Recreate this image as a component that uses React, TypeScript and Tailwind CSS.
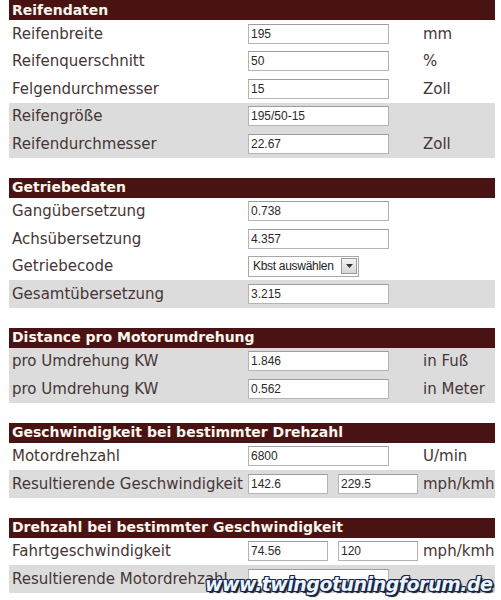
import React from "react"

type Row = {
  label: string
  values: string[]
  unit?: string
  gray?: boolean
  select?: string
}

type Section = { title: string; rows: Row[] }

const sections: Section[] = [
  {
    title: "Reifendaten",
    rows: [
      { label: "Reifenbreite", values: ["195"], unit: "mm" },
      { label: "Reifenquerschnitt", values: ["50"], unit: "%" },
      { label: "Felgendurchmesser", values: ["15"], unit: "Zoll" },
      { label: "Reifengröße", values: ["195/50-15"], gray: true },
      { label: "Reifendurchmesser", values: ["22.67"], unit: "Zoll", gray: true },
    ],
  },
  {
    title: "Getriebedaten",
    rows: [
      { label: "Gangübersetzung", values: ["0.738"] },
      { label: "Achsübersetzung", values: ["4.357"] },
      { label: "Getriebecode", values: [], select: "Kbst auswählen" },
      { label: "Gesamtübersetzung", values: ["3.215"], gray: true },
    ],
  },
  {
    title: "Distance pro Motorumdrehung",
    rows: [
      { label: "pro Umdrehung KW", values: ["1.846"], unit: "in Fuß", gray: true },
      { label: "pro Umdrehung KW", values: ["0.562"], unit: "in Meter", gray: true },
    ],
  },
  {
    title: "Geschwindigkeit bei bestimmter Drehzahl",
    rows: [
      { label: "Motordrehzahl", values: ["6800"], unit: "U/min" },
      { label: "Resultierende Geschwindigkeit", values: ["142.6", "229.5"], unit: "mph/kmh", gray: true },
    ],
  },
  {
    title: "Drehzahl bei bestimmter Geschwindigkeit",
    rows: [
      { label: "Fahrtgeschwindigkeit", values: ["74.56", "120"], unit: "mph/kmh" },
      { label: "Resultierende Motordrehzahl", values: [""], gray: true },
    ],
  },
]

function Field({ value, wide }: { value: string; wide: boolean }) {
  return (
    <div
      className={`${wide ? "w-[141px]" : "w-[80px]"} h-[20px] shrink-0 bg-white border border-[#b4b4b4] border-t-[#9c9c9c] flex items-center pl-[2px] text-[12px] text-[#2a2a2a] font-['Liberation_Sans',Arial,sans-serif]`}
    >
      {value}
    </div>
  )
}

function Select({ text }: { text: string }) {
  return (
    <div className="h-[21px] w-[111px] shrink-0 bg-white border border-[#a8a8a8] flex items-center justify-between pl-[4px] pr-[1px] text-[12px] tracking-[-0.3px] text-[#222] whitespace-nowrap font-['Liberation_Sans',Arial,sans-serif]">
      <span>{text}</span>
      <div className="w-[16px] h-[16px] shrink-0 border border-[#9a9a9a] bg-gradient-to-b from-[#f4f4f4] to-[#d6d6d6] flex items-center justify-center">
        <svg width="7" height="4" viewBox="0 0 7 4">
          <path d="M0 0 L7 0 L3.5 4 Z" fill="#333" />
        </svg>
      </div>
    </div>
  )
}

function SectionBlock({ section }: { section: Section }) {
  return (
    <div className="mb-[20px]">
      <div className="h-[20px] bg-[#4a1313] flex items-center pl-[3px] text-[14px] font-bold text-[#fdf6ee] whitespace-nowrap">
        {section.title}
      </div>
      {section.rows.map((r, i) => (
        <div key={i} className={`h-[27.5px] flex items-center ${r.gray ? "bg-[#dcdcdc]" : "bg-white"}`}>
          <div className="w-[237px] shrink-0 pl-[3px] text-[15px] text-[#463535] whitespace-nowrap overflow-hidden">
            {r.label}
          </div>
          <div className="w-[175px] shrink-0 pl-[2px] flex items-center gap-[10px]">
            {r.select ? (
              <Select text={r.select} />
            ) : (
              r.values.map((v, j) => <Field key={j} value={v} wide={r.values.length === 1} />)
            )}
          </div>
          <div className="pl-[2px] text-[15px] text-[#463535] whitespace-nowrap">{r.unit}</div>
        </div>
      ))}
    </div>
  )
}

export default function App() {
  return (
    <div className="relative w-[501px] h-[600px] bg-white overflow-hidden font-['DejaVu_Sans',Verdana,sans-serif]">
      <div className="ml-[9px] w-[486px]">
        {sections.map((s, i) => (
          <SectionBlock key={i} section={s} />
        ))}
      </div>
      <div
        className="absolute left-[205px] top-[570px] text-[19px] font-bold italic text-[#eef4ff] tracking-[-0.5px] font-['DejaVu_Sans',Verdana,sans-serif]"
        style={{
          textShadow:
            "1px 1px 0 #13284a, -1px -1px 0 #13284a, 1px -1px 0 #13284a, -1px 1px 0 #13284a, 2px 2px 1px #0b1a33, 0 1px 0 #13284a, 1px 0 0 #13284a, -1px 0 0 #13284a, 0 -1px 0 #13284a",
        }}
      >
        www.twingotuningforum.de
      </div>
    </div>
  )
}
